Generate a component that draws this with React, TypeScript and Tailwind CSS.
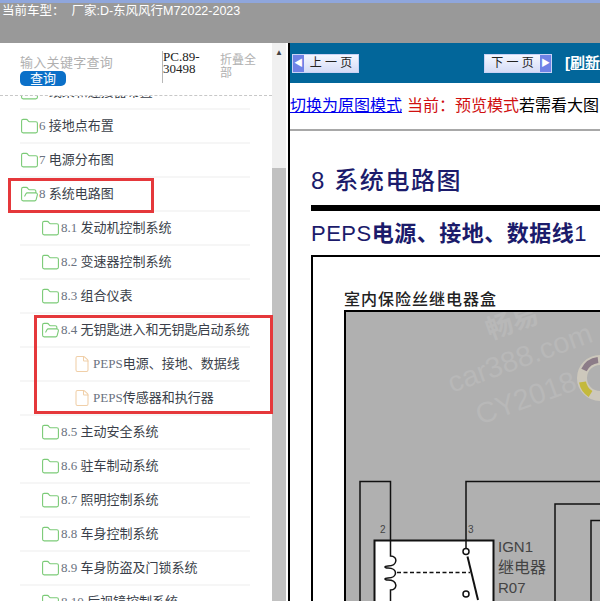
import React from 'react';
import { File, Folder, FolderOpen } from 'lucide-react';

const cjk = 'font-["Liberation_Sans","Noto_Sans_CJK_SC",sans-serif]';
const serif = 'font-["Liberation_Serif","Noto_Sans_CJK_SC",serif]';

type Row = { label: string; level: 1 | 2 | 3; open?: boolean };

const rows: Row[] = [
  { label: '5 线束和连接器布置', level: 1 },
  { label: '6 接地点布置', level: 1 },
  { label: '7 电源分布图', level: 1 },
  { label: '8 系统电路图', level: 1, open: true },
  { label: '8.1 发动机控制系统', level: 2 },
  { label: '8.2 变速器控制系统', level: 2 },
  { label: '8.3 组合仪表', level: 2 },
  { label: '8.4 无钥匙进入和无钥匙启动系统', level: 2, open: true },
  { label: 'PEPS电源、接地、数据线', level: 3 },
  { label: 'PEPS传感器和执行器', level: 3 },
  { label: '8.5 主动安全系统', level: 2 },
  { label: '8.6 驻车制动系统', level: 2 },
  { label: '8.7 照明控制系统', level: 2 },
  { label: '8.8 车身控制系统', level: 2 },
  { label: '8.9 车身防盗及门锁系统', level: 2 },
  { label: '8.10 后视镜控制系统', level: 2 },
];

const TreeRow = ({ row, first }: { row: Row; first: boolean }) => {
  const Icon = row.level === 3 ? File : row.open ? FolderOpen : Folder;
  // numbers and latin prefix render lighter than the chinese text
  const prefix = row.label.match(/^[\w.]+/)?.[0] ?? '';
  return (
    <div
      className={`ml-[20px] flex h-[34px] shrink-0 items-center border-b-2 border-[#f6f6f6] ${first ? '-mt-[20px]' : ''} ${
        row.level === 1 ? 'pl-0' : row.level === 2 ? 'pl-[21px]' : 'pl-[53px]'
      }`}
    >
      <Icon
        size={row.level === 3 ? 18 : 19}
        strokeWidth={1.4}
        className={row.level === 3 ? 'mr-[2px] text-[#f0cfa8]' : row.level === 2 ? 'mr-[1px] text-[#7ccb78]' : 'text-[#7ccb78]'}
      />
      <span className={`${serif} whitespace-nowrap text-[13px] text-[#3a3f4a]`}>
        <span className="text-[#6a7280]">{prefix}</span>
        {row.label.slice(prefix.length)}
      </span>
    </div>
  );
};

const PageButton = ({ label, next }: { label: string; next?: boolean }) => (
  <div className={`flex h-[19px] w-[68px] items-center border border-[#c9d2f5] bg-gradient-to-b from-[#f5f7ff] to-[#d5dcf6] ${next ? 'flex-row-reverse' : ''}`}>
    <div className="flex h-full w-[11px] items-center justify-center bg-[#6f82e6] text-[9px] leading-none text-white">
      {next ? '▶' : '◀'}
    </div>
    <span className={`${cjk} flex-1 text-center text-[12px] leading-none whitespace-pre text-[#222]`}>{label}</span>
  </div>
);

// Wiring drawing, origin is the inner top left corner of the grey fuse box
const Diagram = () => (
  <svg width="256" height="290" viewBox="0 0 256 290" className="block">
    <g className={cjk} fill="#b8b8b8">
      <text x="106" y="81" fontSize="29" transform="rotate(-20 106 81)">car388.com</text>
      <text x="134" y="113" fontSize="29" transform="rotate(-20 134 113)">CY2018</text>
      <text x="144" y="28" fontSize="27" fontWeight="700" transform="rotate(-20 144 28)">畅易</text>
    </g>
    <circle cx="254" cy="66" r="18" fill="none" stroke="#cdc8bc" strokeWidth="10" />
    <path d="M236.500 70a18 18 0 0 0 8 12" fill="none" stroke="#c4b93c" strokeWidth="7" />
    <path d="M238 58a18 18 0 0 1 14-10" fill="none" stroke="#8c7c88" strokeWidth="6" />
    <g fill="none" stroke="#111" strokeWidth="1.5">
      <path d="M14 290V169.500H44.500V229" />
      <path d="M120 229V169.500H256" />
      <path d="M209 290V192H256" />
      <path d="M245 290V208.500H256" />
    </g>
    <rect x="28.500" y="228.500" width="119" height="70" fill="#fff" stroke="#111" strokeWidth="2" />
    <g fill="none" stroke="#111" strokeWidth="1.5">
      <path d="M44.500 229V244C52 244 52 254 42 254C38 254 38 256 42 256C52 256 52 266 42 266C38 266 38 268 42 268C52 268 52 278 44.500 278V290" />
      <path d="M120 229v7" />
      <circle cx="120" cy="239.500" r="3" />
      <circle cx="120" cy="282" r="3" />
    </g>
    <path d="M121.500 244.500L132 288" stroke="#111" strokeWidth="2" />
    <path d="M51 260.500H124" stroke="#111" strokeWidth="1.500" strokeDasharray="4 2.500" />
    <g className={cjk} fill="#444">
      <text x="34" y="221" fontSize="10">2</text>
      <text x="122" y="221" fontSize="10">3</text>
      <text x="152" y="240" fontSize="15">IGN1</text>
      <text x="152" y="261" fontSize="16">继电器</text>
      <text x="152" y="281" fontSize="15">R07</text>
    </g>
  </svg>
);

export default function App() {
  return (
    <div className={`${cjk} relative flex h-[601px] w-[600px] flex-col overflow-hidden bg-white`}>
      {/* Header */}
      <div className="h-[43px] shrink-0 border-t-[3px] border-[#8fa6dc] bg-[#999999] pl-[2px] text-[12.5px] leading-[17px] whitespace-pre text-white">
        当前车型：  厂家:D-东风风行<span className="font-medium">M72022-2023</span>
      </div>

      <div className="flex min-h-0 flex-1">
        {/* Tree column */}
        <div className="flex w-[272px] shrink-0 flex-col">
          <div className="flex h-[53px] shrink-0 items-start border-b border-dashed border-[#c8c8c8] pl-[20px]">
            <div className="w-[142px] pt-[11px]">
              <div className="text-[13px] leading-[18px] tracking-[0.3px] whitespace-nowrap text-[#b0b0b0]">输入关键字查询</div>
              <div className="-mt-[1px] flex h-[15px] w-[46px] items-center justify-center rounded-[5px] bg-[#0b70c8] text-[13px] text-white">
                查询
              </div>
            </div>
            <div className={`${serif} mt-[8px] h-[32px] w-[58px] border-l border-[#b8b8b8] text-[13px] leading-[12px] font-normal text-[#222]`}>
              PC.89-
              <br />
              30498
            </div>
            <div className="mt-[11px] w-[37px] text-[12px] leading-[13px] text-[#b0b0b0]">折叠全部</div>
          </div>
          <div className="flex min-h-0 flex-1 flex-col overflow-hidden pr-[22px]">
            {rows.map((row, i) => (
              <TreeRow key={row.label} row={row} first={i === 0} />
            ))}
          </div>
        </div>

        {/* Scrollbar */}
        <div className="flex w-[14px] shrink-0 flex-col bg-[#f0f0f0]">
          <div className="flex h-[125px] justify-center pt-[5px] text-[8px] leading-[10px] text-[#444]">▲</div>
          <div className="flex-1 bg-[#c1c1c1]" />
        </div>

        {/* Document pane */}
        <div className="ml-[2px] flex min-w-0 flex-1 flex-col border-l-2 border-black">
          <div className="flex h-[40px] shrink-0 items-center bg-[#02669a] pl-[2px]">
            <PageButton label="上 一 页" />
            <div className="ml-[125px]">
              <PageButton label="下 一 页" next />
            </div>
            <span className="ml-[13px] text-[15px] font-bold whitespace-nowrap text-white underline">[刷新</span>
          </div>
          <div className={`${serif} flex h-[48px] shrink-0 items-center overflow-hidden border-b-2 border-[#a8a8a8] text-[16px] whitespace-nowrap`}>
            <span className="text-[#0000ee] underline">切换为原图模式</span>
            <span className="ml-[5px] text-[#d01010]">当前：预览模式</span>
            <span className="text-black">若需看大图</span>
          </div>
          <div className="flex min-h-0 flex-1 flex-col pl-[21px] pt-[32px]">
            <div className="text-[24px] leading-[36px] font-medium tracking-[1.6px] whitespace-nowrap text-[#1b1b6b]">8 系统电路图</div>
            <div className="mt-[6px] h-[6px] shrink-0 bg-black" />
            <div className="mt-[9px] text-[22px] leading-[28px] tracking-[0.5px] whitespace-nowrap text-[#1b1b6b]">
              PEPS<span className="font-bold">电源、接地、数据线</span>1
            </div>
            <div className="mt-[7px] flex min-h-0 flex-1 flex-col border-t-2 border-l-2 border-black pl-[31px] pt-[33px]">
              <div className="text-[16px] leading-[20px] font-medium tracking-[1px] whitespace-nowrap text-[#222]">室内保险丝继电器盒</div>
              <div className="flex-1 overflow-hidden border-t-2 border-l-2 border-black bg-[#b0b0b0]">
                <Diagram />
              </div>
            </div>
          </div>
        </div>
      </div>

      {/* Red annotation boxes drawn over the tree */}
      <div className="pointer-events-none absolute top-[178px] left-[8px] h-[35px] w-[146px] border-[3px] border-[#e5383b]" />
      <div className="pointer-events-none absolute top-[315px] left-[34px] h-[99px] w-[239px] border-[3px] border-[#e5383b]" />
    </div>
  );
}
